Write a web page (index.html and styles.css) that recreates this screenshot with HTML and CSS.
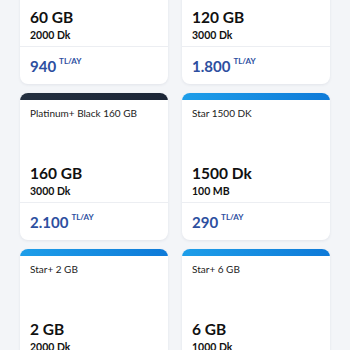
FILE: index.html
```html
<!DOCTYPE html>
<html lang="tr">
<head>
    <meta charset="UTF-8">
    <meta name="viewport" content="width=device-width, initial-scale=1.0">
    <title>Paketler</title>
    <link rel="stylesheet" href="styles.css">
</head>
<body>
    <div class="grid">
        <div class="card">
            <div class="bar"></div>
            <div class="title">Platinum+ 60 GB</div>
            <div class="main">
                <div class="big">60 GB</div>
                <div class="sub">2000 Dk</div>
            </div>
            <div class="price">940 <sup>TL/AY</sup></div>
        </div>
        <div class="card">
            <div class="bar"></div>
            <div class="title">Platinum+ 120 GB</div>
            <div class="main">
                <div class="big">120 GB</div>
                <div class="sub">3000 Dk</div>
            </div>
            <div class="price">1.800 <sup>TL/AY</sup></div>
        </div>
        <div class="card">
            <div class="bar dark"></div>
            <div class="title">Platinum+ Black 160 GB</div>
            <div class="main">
                <div class="big">160 GB</div>
                <div class="sub">3000 Dk</div>
            </div>
            <div class="price">2.100 <sup>TL/AY</sup></div>
        </div>
        <div class="card">
            <div class="bar"></div>
            <div class="title">Star 1500 DK</div>
            <div class="main">
                <div class="big">1500 Dk</div>
                <div class="sub">100 MB</div>
            </div>
            <div class="price">290 <sup>TL/AY</sup></div>
        </div>
        <div class="card">
            <div class="bar"></div>
            <div class="title">Star+ 2 GB</div>
            <div class="main">
                <div class="big">2 GB</div>
                <div class="sub">2000 Dk</div>
            </div>
            <div class="price">190 <sup>TL/AY</sup></div>
        </div>
        <div class="card">
            <div class="bar"></div>
            <div class="title">Star+ 6 GB</div>
            <div class="main">
                <div class="big">6 GB</div>
                <div class="sub">1000 Dk</div>
            </div>
            <div class="price">250 <sup>TL/AY</sup></div>
        </div>
    </div>
</body>
</html>
```

FILE: styles.css
```css
* { margin: 0; padding: 0; box-sizing: border-box; }
html, body { height: 100%; overflow: hidden; }
body { font-family: Lato, "Noto Sans", sans-serif; background: #f3f5f8; color: #1a1a1a; }
.grid { display: grid; grid-template-columns: 148px 148px; column-gap: 14px; row-gap: 9px; padding-left: 20px; margin-top: -63px; }
.card { height: 147px; background: #fff; border-radius: 8px; overflow: hidden; display: flex; flex-direction: column; box-shadow: 0 1px 3px rgba(20, 40, 80, 0.08); }
.bar { height: 7px; background: linear-gradient(90deg, #1e9ee9, #0e7ad8); }
.bar.dark { background: linear-gradient(90deg, #243040, #1b2536); }
.title { padding: 7px 10px 0; font-size: 10px; line-height: 13px; color: #222; }
.main { margin-top: auto; padding: 0 10px 3px; border-bottom: 1px solid #eceef2; }
.big { font-size: 15.5px; line-height: 19px; font-weight: 700; color: #111; }
.sub { margin-top: 1px; font-size: 10.5px; line-height: 15px; font-weight: 700; color: #111; }
.price { height: 37px; padding: 0 10px; display: flex; align-items: center; font-size: 15px; font-weight: 700; color: #2d4f9f; }
.price sup { font-size: 8px; margin-left: 3px; align-self: flex-start; margin-top: 9px; }
```
